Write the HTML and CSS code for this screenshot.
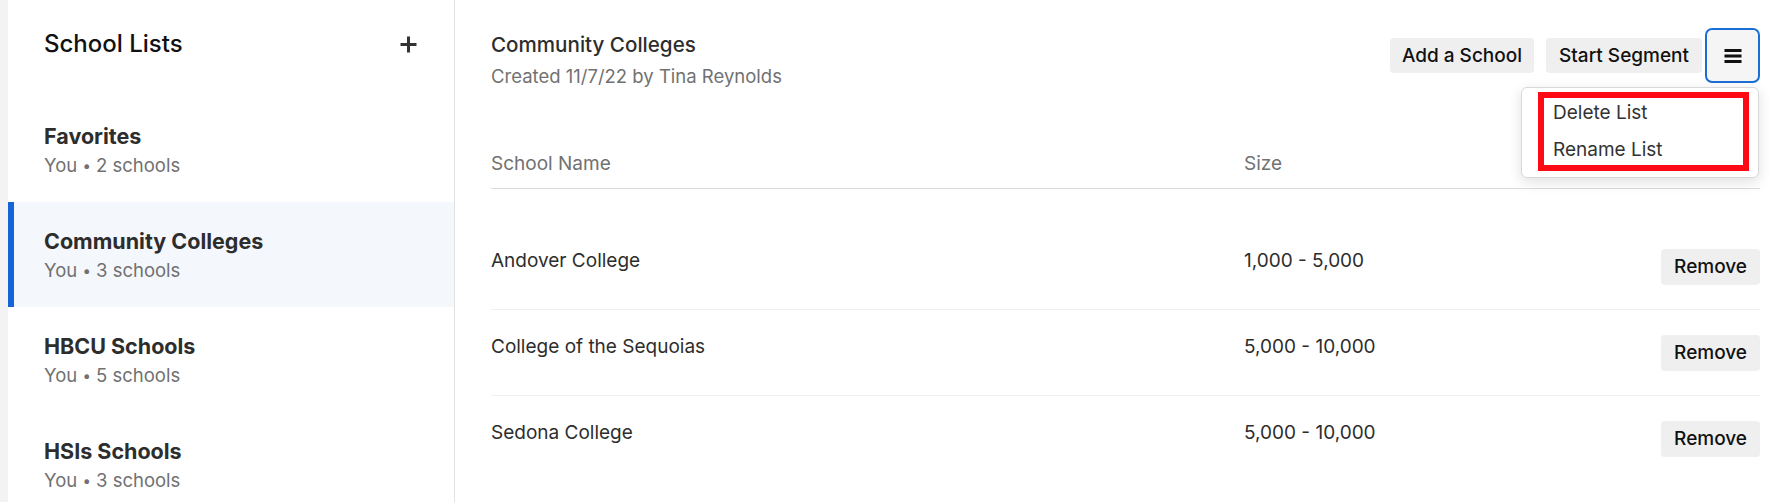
FILE: index.html
```html
<!DOCTYPE html>
<html lang="en">
<head>
<meta charset="utf-8">
<title>School Lists</title>
<link rel="stylesheet" href="styles.css">
</head>
<body>
<div class="app">
  <aside class="sidebar">
    <div class="sidebar-header">
      <h1 class="sidebar-title">School Lists</h1>
      <button class="icon-btn" aria-label="Add list">
        <svg width="17" height="17" viewBox="0 0 17 17"><path d="M8.5 0.5v16M0.5 8.5h16" stroke="#333" stroke-width="3" fill="none"/></svg>
      </button>
    </div>
    <ul class="list">
      <li class="list-item">
        <div class="item-title">Favorites</div>
        <div class="item-sub">You <span class="dot">•</span> 2 schools</div>
      </li>
      <li class="list-item active">
        <div class="item-title">Community Colleges</div>
        <div class="item-sub">You <span class="dot">•</span> 3 schools</div>
      </li>
      <li class="list-item">
        <div class="item-title">HBCU Schools</div>
        <div class="item-sub">You <span class="dot">•</span> 5 schools</div>
      </li>
      <li class="list-item">
        <div class="item-title">HSIs Schools</div>
        <div class="item-sub">You <span class="dot">•</span> 3 schools</div>
      </li>
    </ul>
  </aside>
  <main class="main">
    <div class="topbar">
      <div class="title-block">
        <h2 class="list-title">Community Colleges</h2>
        <div class="list-meta">Created 11/7/22 by Tina Reynolds</div>
      </div>
      <div class="actions">
        <button class="btn">Add a School</button>
        <button class="btn btn-wide">Start Segment</button>
        <div class="menu-wrap">
          <button class="menu-btn" aria-label="More actions">
            <svg width="18" height="14" viewBox="0 0 18 14"><path d="M0.5 1.5h17M0.5 7h17M0.5 12.5h17" stroke="#111" stroke-width="2.8" fill="none"/></svg>
          </button>
          <div class="dropdown">
            <div class="dropdown-items">
              <div class="dropdown-item">Delete List</div>
              <div class="dropdown-item">Rename List</div>
            </div>
          </div>
        </div>
      </div>
    </div>
    <div class="table">
      <div class="table-head">
        <div class="th">School Name</div>
        <div class="th">Size</div>
        <div class="th"></div>
      </div>
      <div class="table-body">
        <div class="row">
          <div class="cell">Andover College</div>
          <div class="cell">1,000 - 5,000</div>
          <button class="btn btn-remove">Remove</button>
        </div>
        <div class="row">
          <div class="cell">College of the Sequoias</div>
          <div class="cell">5,000 - 10,000</div>
          <button class="btn btn-remove">Remove</button>
        </div>
        <div class="row">
          <div class="cell">Sedona College</div>
          <div class="cell">5,000 - 10,000</div>
          <button class="btn btn-remove">Remove</button>
        </div>
      </div>
    </div>
  </main>
</div>
</body>
</html>
```

FILE: styles.css
```css
* { box-sizing: border-box; }

html, body {
  margin: 0;
  padding: 0;
  background: #ffffff;
  font-family: Inter, "Noto Sans", "Liberation Sans", sans-serif;
  color: #2d2d2d;
  overflow: hidden;
}

.app {
  display: flex;
  height: 502px;
  padding-left: 8px;
  background: #f3f3f3;
}

/* Sidebar */
.sidebar {
  width: 447px;
  flex: 0 0 447px;
  background: #ffffff;
  border-right: 1px solid #e2e2e2;
}

.sidebar-header {
  display: flex;
  align-items: center;
  justify-content: space-between;
  height: 97px;
  padding: 29px 37px 38px 36px;
}

.sidebar-title {
  margin: 0;
  font-size: 24px;
  line-height: 30px;
  font-weight: 500;
  color: #111111;
}

.icon-btn {
  display: flex;
  align-items: center;
  justify-content: center;
  padding: 0;
  border: none;
  background: none;
  width: 17px;
  height: 17px;
}

.list {
  list-style: none;
  margin: 0;
  padding: 0;
}

.list-item {
  height: 105px;
  padding: 26px 0 25px 30px;
  border-left: 6px solid transparent;
}

.list-item.active {
  background: #f4f7fc;
  border-left-color: #1565d8;
}

.item-title {
  font-size: 21.5px;
  line-height: 26px;
  font-weight: 700;
  color: #2d2d2d;
}

.item-sub {
  margin-top: 4px;
  font-size: 18.5px;
  line-height: 24px;
  color: #717171;
}

.dot {
  font-size: 15px;
  vertical-align: 1px;
}

/* Main */
.main {
  flex: 1;
  background: #ffffff;
  padding: 28px 32px 0 36px;
}

.topbar {
  display: flex;
  justify-content: space-between;
  align-items: flex-start;
}

.title-block {
  margin-top: 4px;
}

.list-title {
  margin: 0;
  font-size: 20.6px;
  line-height: 26px;
  font-weight: 500;
  color: #2d2d2d;
}

.list-meta {
  margin-top: 6px;
  font-size: 18.5px;
  line-height: 24px;
  color: #717171;
}

.actions {
  display: flex;
  align-items: center;
  height: 55px;
}

.btn {
  font-family: inherit;
  font-size: 19px;
  font-weight: 500;
  color: #111111;
  background: #efefef;
  border: none;
  border-radius: 4px;
  height: 35px;
  padding: 0 12px;
  line-height: 35px;
}

.btn-wide {
  padding: 0 13px;
}

.actions .btn + .btn {
  margin-left: 12px;
}

.menu-wrap {
  position: relative;
  margin-left: 3px;
}

.menu-btn {
  display: flex;
  align-items: center;
  justify-content: center;
  width: 55px;
  height: 55px;
  padding: 0;
  background: #f5f5f5;
  border: 2px solid #1a6fd6;
  border-radius: 7px;
}

.dropdown {
  position: absolute;
  top: 59px;
  right: 1px;
  width: 238px;
  padding: 4px 9px 6px 16px;
  background: #ffffff;
  border: 1px solid #d8d8d8;
  border-radius: 6px;
  box-shadow: 0 4px 14px rgba(0, 0, 0, 0.12);
  z-index: 10;
}

.dropdown-items {
  display: flex;
  flex-direction: column;
  gap: 13px;
  padding: 3px 9px 3px;
  border: 6px solid #ff0a14;
}

.dropdown-item {
  font-size: 19px;
  line-height: 24px;
  color: #333333;
}

/* Table */
.table {
  margin-top: 64px;
}

.table-head,
.row {
  display: grid;
  grid-template-columns: 753px 1fr auto;
}

.table-head {
  border-bottom: 1px solid #dcdcdc;
  padding-bottom: 12px;
}

.th {
  font-size: 19px;
  line-height: 24px;
  color: #717171;
}

.table-body {
  padding-top: 35px;
}

.row {
  padding: 25px 0 24px;
  border-bottom: 1px solid #efefef;
}

.row:last-child {
  border-bottom: none;
}

.cell {
  font-size: 19px;
  line-height: 23px;
  color: #2d2d2d;
}

.btn-remove {
  height: 36px;
  line-height: 36px;
  padding: 0 13px;
}
```
